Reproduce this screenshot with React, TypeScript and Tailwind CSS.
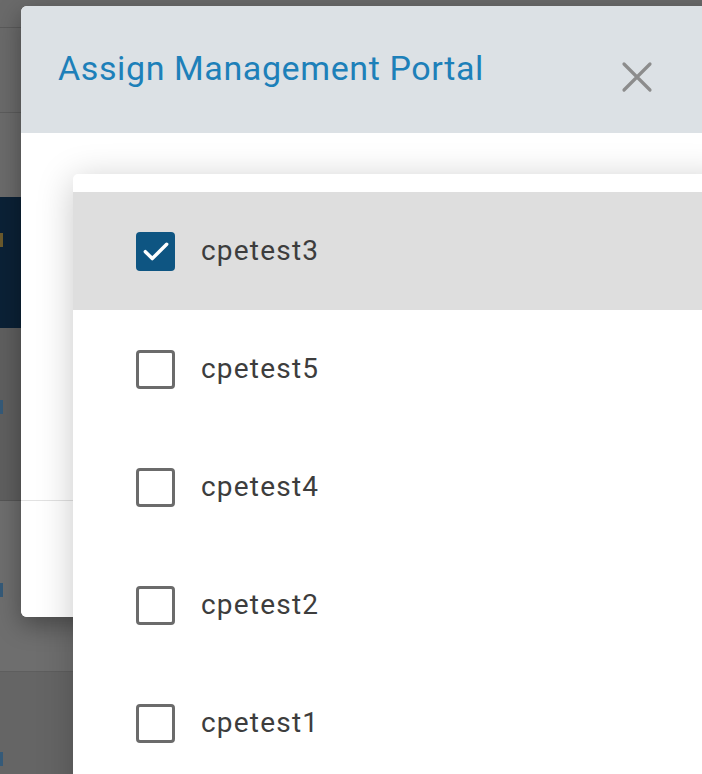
import React from "react";

const items = [
  { name: "cpetest3", checked: true },
  { name: "cpetest5", checked: false },
  { name: "cpetest4", checked: false },
  { name: "cpetest2", checked: false },
  { name: "cpetest1", checked: false },
];

function Check({ checked }: { checked: boolean }) {
  if (checked) {
    return (
      <div className="w-[39px] h-[39px] rounded-[4px] bg-[#0e5582] flex items-center justify-center">
        <svg width="32" height="32" viewBox="0 0 24 24" fill="none">
          <path d="M4 12.5l5.2 5.2L20 7" stroke="#ffffff" strokeWidth="2.6" strokeLinecap="round" strokeLinejoin="round" />
        </svg>
      </div>
    );
  }
  return <div className="w-[39px] h-[39px] rounded-[4px] border-[3px] border-[#6b6b6b] bg-white" />;
}

export default function App() {
  return (
    <div className="relative w-[702px] h-[774px] overflow-hidden bg-[#696969]" style={{ fontFamily: "Roboto, 'Liberation Sans', sans-serif" }}>
      {/* background page under overlay */}
      <div className="flex flex-col w-full">
        <div className="h-[28px] bg-[#6a6a6a] border-b border-[#5a5a5a]" />
        <div className="h-[85px] bg-[#6a6a6a] border-b border-[#5c5c5c]" />
        <div className="h-[84px] bg-[#6b6b6b]" />
        <div className="h-[131px] bg-[#0b2136] relative">
          <div className="absolute left-0 top-[36px] w-[3px] h-[14px] bg-[#6b5a2c]" />
        </div>
        <div className="h-[172px] bg-[#5f5f5f] relative">
          <div className="absolute left-0 top-[72px] w-[3px] h-[14px] bg-[#355a78]" />
        </div>
        <div className="h-[1px] bg-[#555555]" />
        <div className="h-[170px] bg-[#6e6e6e] relative">
          <div className="absolute left-0 top-[82px] w-[3px] h-[14px] bg-[#355a78]" />
        </div>
        <div className="h-[1px] bg-[#5e5e5e]" />
        <div className="h-[110px] bg-[#656565] relative">
          <div className="absolute left-0 top-[80px] w-[3px] h-[14px] bg-[#355a78]" />
        </div>
      </div>

      {/* modal */}
      <div className="absolute left-[21px] top-[6px] w-[720px] h-[611px] bg-white rounded-[6px] overflow-hidden shadow-[0_8px_24px_rgba(0,0,0,0.35)] flex flex-col">
        <div className="h-[127px] bg-[#dce1e5] flex items-start justify-between pl-[37px] pr-[88px] pt-[42px]">
          <div className="text-[34px] leading-[40px] text-[#1d80b9] tracking-[0.6px]">Assign Management Portal</div>
          <svg width="32" height="32" viewBox="0 0 32 32" className="mt-[13px]">
            <path d="M3 3L29 29M29 3L3 29" stroke="#8c8c8c" strokeWidth="3.2" strokeLinecap="round" />
          </svg>
        </div>
        <div className="h-[367px] bg-white" />
        <div className="h-[1px] bg-[#e2e2e2]" />
        <div className="flex-1 bg-white" />
      </div>

      {/* dropdown */}
      <div className="absolute left-[73px] top-[174px] w-[660px] h-[640px] bg-white rounded-[5px] shadow-[0_6px_36px_rgba(0,0,0,0.22)] pt-[18px]">
        {items.map((it) => (
          <div
            key={it.name}
            className={`h-[118px] flex items-center pl-[63px] gap-[26px] ${it.checked ? "bg-[#dedede]" : "bg-white"}`}
          >
            <Check checked={it.checked} />
            <span className="text-[28px] text-[#3d3d3d] leading-none tracking-[1.2px]">{it.name}</span>
          </div>
        ))}
      </div>
    </div>
  );
}
